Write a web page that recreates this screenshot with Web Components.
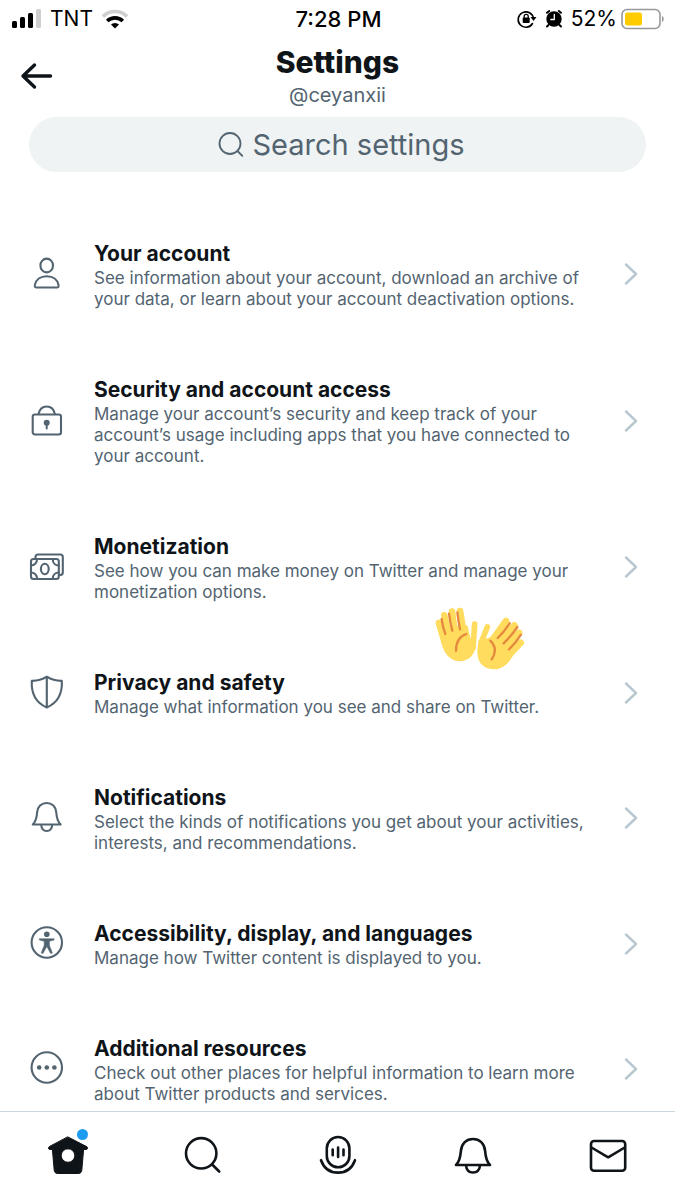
<!DOCTYPE html>
<html lang="en">
<head>
<meta charset="utf-8">
<meta name="viewport" content="width=device-width, initial-scale=1">
<title>Settings</title>
<style>
  html, body {
    height: 100%;
    margin: 0;
  }

  body {
    background: #fff;
    color: #0f1419;
    font-family: Inter, "Liberation Sans", sans-serif;
    --muted: #536471;
    --chevron: #b9c8d1;
    --divider: #c6d7e1;
    --field: #eff3f4;
    --accent: #1d9bf0;
  }
</style>
</head>
<body>
<settings-app>
  <status-bar slot="top" carrier="TNT" time="7:28 PM" battery="52%"></status-bar>
  <page-header slot="top">
    Settings
    <span slot="handle">@ceyanxii</span>
  </page-header>
  <search-field slot="top" label="Search settings"></search-field>

  <settings-row icon="user" heading="Your account">See information about your account, download an archive of your data, or learn about your account deactivation options.</settings-row>
  <settings-row icon="lock" heading="Security and account access">Manage your account’s security and keep track of your account’s usage including apps that you have connected to your account.</settings-row>
  <settings-row icon="money" heading="Monetization">See how you can make money on Twitter and manage your monetization options.</settings-row>
  <settings-row icon="shield" heading="Privacy and safety">Manage what information you see and share on Twitter.</settings-row>
  <settings-row icon="bell" heading="Notifications">Select the kinds of notifications you get about your activities, interests, and recommendations.</settings-row>
  <settings-row icon="accessibility" heading="Accessibility, display, and languages">Manage how Twitter content is displayed to you.</settings-row>
  <settings-row icon="more" heading="Additional resources">Check out other places for helpful information to learn more about Twitter products and services.</settings-row>

  <tab-bar slot="bottom"></tab-bar>
  <hands-sticker slot="overlay"></hands-sticker>
</settings-app>

<script>
  // Each icon: width, height, markup. Strokes take currentColor.
  const ICONS = {
    signal: [30, 20, `
      <g fill="currentColor" stroke="none">
        <rect x="0" y="12" width="5" height="7" rx="1.5"/>
        <rect x="8" y="8" width="5" height="11" rx="1.5"/>
        <rect x="16" y="4" width="5" height="15" rx="1.5"/>
        <rect x="24" y="0" width="5" height="19" rx="1.5" fill="#cfcfcf"/>
      </g>`],
    wifi: [28, 20, `
      <path d="M2 7.500a17 17 0 0 1 24 0" stroke="#cfcfcf" stroke-width="3.600" stroke-linecap="butt"/>
      <path d="M6.200 12a11.200 11.200 0 0 1 15.600 0" stroke-width="3.600" stroke-linecap="butt"/>
      <path d="M14 19.500l-4-4a5.800 5.800 0 0 1 8 0z" fill="currentColor" stroke="none"/>`],
    rotation: [20, 20, `
      <path d="M15.500 14.500a7.700 7.700 0 1 1 1-5" stroke-width="1.600"/>
      <path d="M13.500 8h6l-3 4z" fill="currentColor" stroke="none"/>
      <rect x="5.700" y="8.500" width="7" height="5.500" rx="1" fill="currentColor" stroke="none"/>
      <path d="M7.200 9V7.300a2 2 0 0 1 4 0V9" stroke-width="1.300"/>`],
    alarm: [18, 20, `
      <circle cx="9" cy="10" r="7.700" fill="currentColor" stroke="none"/>
      <path d="M2 3.800l2.200-1.800M16 3.800L13.800 2M3.500 16L2 17.500M14.500 16l1.500 1.500" stroke-width="2"/>
      <path d="M9.300 5.500v5H5.800" stroke="#fff" stroke-width="1.300"/>`],
    battery: [44, 22, `
      <rect x="1" y="1.500" width="38" height="19" rx="5" stroke="#98989b" stroke-width="1.600"/>
      <rect x="4" y="4.500" width="17" height="13" rx="2.500" fill="#fc0" stroke="none"/>
      <path d="M41 8c2.200.6 2.200 5.400 0 6z" fill="#98989b" stroke="none"/>`],
    back: [32, 26, `<path d="M29.500 13H2M13.500 2L2 13l11.500 11" stroke-width="3.400"/>`],
    find: [26, 26, `<circle cx="12" cy="11.500" r="10.500" stroke-width="1.800"/><path d="M19.500 19l4.800 4.800" stroke-width="1.800"/>`],
    chevron: [16, 24, `<path d="M3 2.500l10 9.500L3 21.500" stroke-width="2.500"/>`],
    user: [36, 36, `
      <ellipse cx="18.700" cy="9.500" rx="6.300" ry="6.900"/>
      <path d="M8.500 31.500h20.400c1.300 0 2-.9 1.700-2.200-1-5.600-5.700-9-11.900-9s-10.900 3.400-11.900 9c-.3 1.300.4 2.200 1.700 2.200z"/>`],
    lock: [36, 36, `
      <rect x="4.700" y="11.500" width="28.300" height="20" rx="2.200"/>
      <path d="M10.500 11c1-4.600 4.100-7.500 8.200-7.500s7.200 2.900 8.200 7.500"/>
      <circle cx="18.700" cy="19.800" r="3" fill="currentColor" stroke="none"/>
      <path d="M18.700 20v5.500" stroke-width="2"/>`],
    money: [36, 36, `
      <rect x="3" y="10" width="27.800" height="20" rx="2.500"/>
      <path d="M7.500 9.500V8c0-1.500 1-2.500 2.500-2.500h22.300c1.500 0 2.500 1 2.500 2.500v15.500c0 1.500-1 2.500-2.500 2.500h-1"/>
      <ellipse cx="16.800" cy="20" rx="3.900" ry="5.200"/>
      <path d="M3 16.500c3.500 0 6-2.500 6-6M30.800 16.500c-3.500 0-6-2.500-6-6M3 23.500c3.500 0 6 2.500 6 6M30.800 23.500c-3.500 0-6 2.500-6 6"/>`],
    shield: [36, 36, `
      <path d="M18.800 1.700c4.700 3 9.700 4.300 15 4.200.7 12.600-4.600 22.100-15 26.600C8.400 28 3.100 18.500 3.800 5.900c5.300.1 10.300-1.200 15-4.200zM18.800 1.700v30.500"/>`],
    bell: [36, 36, `
      <path d="M4.800 24.500c3-3 4-6.500 4.300-12C9.400 6.800 13.500 3 18.700 3s9.300 3.800 9.600 9.500c.3 5.500 1.300 9 4.300 12zM13.200 25c.3 3.700 2.300 6 5.500 6s5.200-2.300 5.500-6"/>`],
    accessibility: [36, 36, `
      <circle cx="18.800" cy="16.500" r="15.200"/>
      <circle cx="18.800" cy="8.200" r="2.800" fill="currentColor" stroke="none"/>
      <path d="M11.500 12.700h14.600v1.300l-4.700 1.300v4l3 7.600-1.700.7-3.900-7-3.900 7-1.700-.7 3-7.600v-4l-4.700-1.300z" fill="currentColor" stroke-width=".5"/>`],
    more: [36, 36, `
      <circle cx="18.800" cy="16.500" r="15.200"/>
      <g fill="currentColor" stroke="none"><circle cx="11.200" cy="16.500" r="2.300"/><circle cx="18.800" cy="16.500" r="2.300"/><circle cx="26.400" cy="16.500" r="2.300"/></g>`],
    home: [48, 48, `
      <path fill-rule="evenodd" fill="currentColor" stroke-width="1" d="M24 6L43 15.800c1 .7.800 2.400-.6 2.700H39.600l-1.800 20.700c-.2 2-1.300 3.300-3.300 3.300h-21c-2 0-3.100-1.300-3.300-3.300L8.400 18.500H5.600c-1.400-.3-1.600-2-.6-2.700zM24 17.700a6.800 6.800 0 1 0 0 13.600 6.800 6.800 0 1 0 0-13.600z"/>`],
    search: [48, 48, `<circle cx="22.200" cy="22.300" r="15.200" stroke-width="2.600"/><path d="M33.200 33.500l7 7" stroke-width="2.600"/>`],
    mic: [48, 48, `
      <rect x="12.800" y="6" width="22.600" height="30.300" rx="11.300" stroke-width="2.600"/>
      <path d="M18.700 18.500v5.700M24.100 16.500v9.500M29.500 18.500v5.700M7 29.200C10 37.500 16.300 41.600 24 41.600s14-4.100 17-12.400" stroke-width="2.600"/>`],
    alerts: [48, 48, `
      <path d="M7 34c3.600-3.600 4.400-7.600 4.900-14.200C12.500 12.300 17.500 8 24 8s11.500 4.300 12.100 11.800C36.600 26.400 37.400 30.400 41 34zM17 34.500c.4 4.300 3 7 7 7s6.600-2.700 7-7" stroke-width="2.600"/>`],
    mail: [48, 48, `<rect x="7" y="10" width="34.200" height="29.800" rx="3" stroke-width="2.600"/><path d="M7.500 16.500l16.700 9.800 16.500-9.800" stroke-width="2.600"/>`]
  };

  class UiIcon extends HTMLElement {
    constructor() {
      super();
      this.attachShadow({ mode: 'open' });
    }

    connectedCallback() {
      const [w, h, body] = ICONS[this.getAttribute('name')];
      this.shadowRoot.innerHTML = `
        <style>
          :host { display: block; flex: none; }
          svg { display: block; overflow: visible; }
        </style>
        <svg width="${w}" height="${h}" viewBox="0 0 ${w} ${h}" fill="none" stroke="currentColor"
             stroke-width="2.100" stroke-linecap="round" stroke-linejoin="round" aria-hidden="true">${body}</svg>
      `;
    }
  }

  class SettingsApp extends HTMLElement {
    constructor() {
      super();
      this.attachShadow({ mode: 'open' });
      this.shadowRoot.innerHTML = `
        <style>
          :host {
            display: flex;
            flex-direction: column;
            height: 100%;
            position: relative;
          }
          main {
            flex: 1;
            min-height: 0;
            overflow-y: auto;
            scrollbar-width: none;
            padding-top: 34px;
            box-sizing: border-box;
          }
        </style>
        <slot name="top"></slot>
        <main><slot></slot></main>
        <slot name="bottom"></slot>
        <slot name="overlay"></slot>
      `;
    }
  }

  class StatusBar extends HTMLElement {
    constructor() {
      super();
      this.attachShadow({ mode: 'open' });
    }

    connectedCallback() {
      this.shadowRoot.innerHTML = `
        <style>
          :host {
            display: grid;
            grid-template-columns: 1fr auto 1fr;
            align-items: center;
            height: 37px;
            padding: 0 10px 0 12px;
            font-size: 21px;
            color: #000;
          }
          div { display: flex; align-items: center; gap: 8px; }
          .right { justify-content: flex-end; }
          .charge { display: flex; align-items: center; gap: 4px; }
          time { font-size: 22px; font-weight: 500; }
        </style>
        <div>
          <ui-icon name="signal"></ui-icon>
          <span>${this.getAttribute('carrier')}</span>
          <ui-icon name="wifi"></ui-icon>
        </div>
        <time>${this.getAttribute('time')}</time>
        <div class="right">
          <ui-icon name="rotation"></ui-icon>
          <ui-icon name="alarm"></ui-icon>
          <span class="charge">${this.getAttribute('battery')} <ui-icon name="battery"></ui-icon></span>
        </div>
      `;
    }
  }

  class PageHeader extends HTMLElement {
    constructor() {
      super();
      this.attachShadow({ mode: 'open' });
      this.shadowRoot.innerHTML = `
        <style>
          :host {
            display: grid;
            grid-template-columns: 1fr auto 1fr;
            align-items: center;
            padding: 6px 21px 8px;
            text-align: center;
          }
          button {
            justify-self: start;
            padding: 0;
            border: 0;
            background: none;
            color: inherit;
          }
          h1 { margin: 0; font-size: 30px; line-height: 38px; font-weight: 800; }
          p { margin: 0; font-size: 20px; line-height: 28px; color: var(--muted); }
        </style>
        <button type="button" aria-label="Back"><ui-icon name="back"></ui-icon></button>
        <div>
          <h1><slot></slot></h1>
          <p><slot name="handle"></slot></p>
        </div>
      `;
    }
  }

  class SearchField extends HTMLElement {
    constructor() {
      super();
      this.attachShadow({ mode: 'open' });
    }

    connectedCallback() {
      const label = this.getAttribute('label');
      this.shadowRoot.innerHTML = `
        <style>
          :host { display: block; padding: 0 29px; }
          label {
            display: flex;
            align-items: center;
            justify-content: center;
            gap: 8px;
            height: 55px;
            padding-left: 8px;
            border-radius: 28px;
            background: var(--field);
            color: var(--muted);
          }
          input {
            field-sizing: content;
            padding: 0;
            border: 0;
            outline: 0;
            background: none;
            font: inherit;
            font-size: 29px;
            line-height: 36px;
            color: inherit;
          }
          input::placeholder { color: var(--muted); opacity: 1; }
        </style>
        <label>
          <ui-icon name="find"></ui-icon>
          <input type="text" placeholder="${label}" aria-label="${label}">
        </label>
      `;
    }
  }

  class SettingsRow extends HTMLElement {
    constructor() {
      super();
      this.attachShadow({ mode: 'open' });
    }

    connectedCallback() {
      this.shadowRoot.innerHTML = `
        <style>
          :host { display: block; }
          a {
            display: flex;
            align-items: center;
            padding: 32px 36px 32px 28px;
            color: inherit;
            text-decoration: none;
          }
          .text { flex: 1; margin: 0 26px 0 30px; padding-top: 2px; }
          h2 { margin: 0; font-size: 21px; line-height: 28px; font-weight: 650; }
          p { margin: 0; font-size: 17px; line-height: 21px; color: var(--muted); }
          .icon { color: var(--muted); }
          .chevron { color: var(--chevron); }
        </style>
        <a href="#${this.getAttribute('icon')}">
          <ui-icon class="icon" name="${this.getAttribute('icon')}"></ui-icon>
          <div class="text">
            <h2>${this.getAttribute('heading')}</h2>
            <p><slot></slot></p>
          </div>
          <ui-icon class="chevron" name="chevron"></ui-icon>
        </a>
      `;
    }
  }

  class TabBar extends HTMLElement {
    constructor() {
      super();
      this.attachShadow({ mode: 'open' });
      this.shadowRoot.innerHTML = `
        <style>
          :host { display: block; border-top: 1px solid var(--divider); background: #fff; }
          nav { display: grid; grid-template-columns: repeat(5, 1fr); }
          a {
            display: flex;
            justify-content: center;
            padding: 19px 0 21px;
            color: inherit;
          }
          .tab { position: relative; }
          .dot {
            position: absolute;
            top: -2px;
            right: 4px;
            width: 11px;
            height: 11px;
            border-radius: 50%;
            background: var(--accent);
          }
        </style>
        <nav>
          <a href="#home" aria-label="Home"><span class="tab"><ui-icon name="home"></ui-icon><i class="dot"></i></span></a>
          <a href="#search" aria-label="Search"><ui-icon name="search"></ui-icon></a>
          <a href="#spaces" aria-label="Spaces"><ui-icon name="mic"></ui-icon></a>
          <a href="#alerts" aria-label="Notifications"><ui-icon name="alerts"></ui-icon></a>
          <a href="#messages" aria-label="Messages"><ui-icon name="mail"></ui-icon></a>
        </nav>
      `;
    }
  }

  // Pair of open hands dropped over the list
  class HandsSticker extends HTMLElement {
    constructor() {
      super();
      this.attachShadow({ mode: 'open' });
      this.shadowRoot.innerHTML = `
        <style>
          :host {
            display: block;
            position: absolute;
            top: 600px;
            left: 430px;
            pointer-events: none;
          }
          svg { display: block; }
        </style>
        <svg width="100" height="75" viewBox="0 0 300 225" fill="none" stroke-linecap="round" stroke-linejoin="round" aria-hidden="true">
          <g stroke="#ffdc5d" fill="#ffdc5d">
            <path stroke-width="20" d="M27 69l18 62M43 46l16 75M66 35l10 76M90 33l12 72"/>
            <path stroke-width="17" d="M134 72l-5 72"/>
            <path stroke="none" d="M36 80L112 76L122 116L137 126Q138 182 86 184Q46 178 34 128z"/>
            <path stroke-width="17" d="M172 81l-18 45"/>
            <path stroke-width="20" d="M228 63l-40 56M253 76l-40 50M267 98l-36 44M272 128l-34 36"/>
            <path stroke="none" d="M146 122L182 112L226 70L266 112L254 156Q232 208 190 208Q128 202 146 122z"/>
          </g>
          <g stroke="#e5893f" stroke-width="7">
            <path d="M35 57Q38 82 46 102M57 41Q60 66 67 92M82 37Q85 64 90 88M109 102Q78 112 78 152"/>
            <path d="M239 70Q222 96 203 114M262 81Q244 108 221 130M273 104Q258 128 237 148M181 122Q206 148 185 178"/>
          </g>
        </svg>
      `;
    }
  }

  customElements.define('ui-icon', UiIcon);
  customElements.define('settings-app', SettingsApp);
  customElements.define('status-bar', StatusBar);
  customElements.define('page-header', PageHeader);
  customElements.define('search-field', SearchField);
  customElements.define('settings-row', SettingsRow);
  customElements.define('tab-bar', TabBar);
  customElements.define('hands-sticker', HandsSticker);
</script>
</body>
</html>
